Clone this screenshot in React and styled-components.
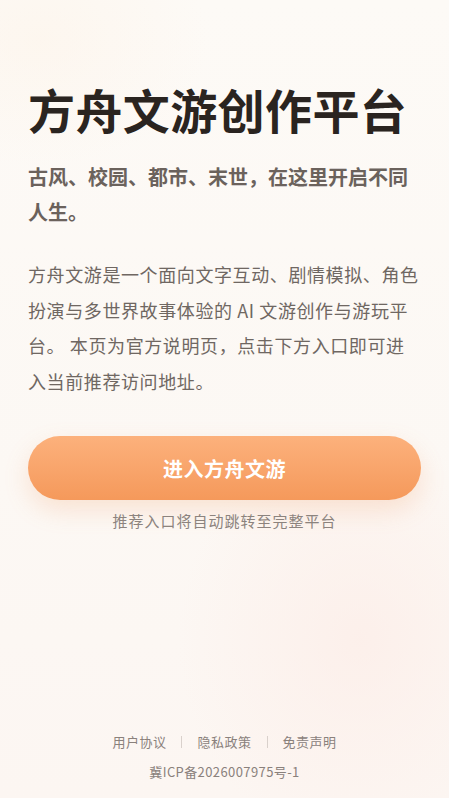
import React from "react";
import styled, { createGlobalStyle } from "styled-components";

const GlobalStyle = createGlobalStyle`
  html, body {
    margin: 0;
    padding: 0;
    background: #fdfaf6;
  }
  body {
    font-family: "Noto Sans CJK SC", "Noto Sans", sans-serif;
    -webkit-font-smoothing: antialiased;
  }
  * { box-sizing: border-box; }
`;

const Page = styled.div`
  min-height: 100vh;
  display: flex;
  flex-direction: column;
  background:
    radial-gradient(ellipse 260px 300px at 360px 640px, rgba(252, 232, 226, 0.5), rgba(252, 232, 226, 0) 70%),
    radial-gradient(ellipse 240px 180px at 40px 40px, rgba(253, 242, 230, 0.45), rgba(253, 242, 230, 0) 70%),
    linear-gradient(180deg, #fdfaf6 0%, #fcf8f4 60%, #fcf6f2 100%);
`;

const Main = styled.main`
  padding: 80px 28px 0;
  display: flex;
  flex-direction: column;
`;

const Title = styled.h1`
  margin: 0;
  font-size: 47px;
  line-height: 57px;
  font-weight: 700;
  letter-spacing: 0.4px;
  color: #2a2420;
  white-space: nowrap;
`;

const Subtitle = styled.p`
  margin: 22px 0 0;
  font-size: 20px;
  line-height: 35px;
  font-weight: 700;
  color: #6b625c;
`;

const Body = styled.p`
  margin: 28px 0 0;
  font-size: 18px;
  line-height: 35.5px;
  font-weight: 400;
  letter-spacing: 0.6px;
  color: #6f6762;
`;

const EnterButton = styled.button`
  margin-top: 37px;
  height: 64px;
  width: 100%;
  border: none;
  border-radius: 32px;
  background: linear-gradient(180deg, #fcb17c 0%, #f5995b 100%);
  box-shadow: 0 10px 24px rgba(240, 150, 90, 0.22);
  color: #ffffff;
  font-family: inherit;
  font-size: 20px;
  font-weight: 700;
  letter-spacing: 0.5px;
  cursor: pointer;
`;

const Hint = styled.p`
  margin: 10px 0 0;
  text-align: center;
  font-size: 15px;
  line-height: 22px;
  letter-spacing: 1px;
  color: #8c837e;
`;

const Footer = styled.footer`
  margin-top: auto;
  padding: 0 0 16px;
  display: flex;
  flex-direction: column;
  align-items: center;
  gap: 10px;
`;

const Links = styled.nav`
  display: flex;
  align-items: center;
  gap: 15px;
`;

const FooterLink = styled.a`
  font-size: 13px;
  line-height: 20px;
  letter-spacing: 0.5px;
  color: #8a817c;
  text-decoration: none;
`;

const Divider = styled.span`
  width: 1px;
  height: 12px;
  background: #d9d1cc;
`;

const Icp = styled.div`
  font-size: 13px;
  line-height: 20px;
  letter-spacing: 0.4px;
  color: #8a817c;
`;

export default function App() {
  return (
    <>
      <GlobalStyle />
      <Page>
        <Main>
          <Title>方舟文游创作平台</Title>
          <Subtitle>古风、校园、都市、末世，在这里开启不同人生。</Subtitle>
          <Body>
            方舟文游是一个面向文字互动、剧情模拟、角色扮演与多世界故事体验的 AI 文游创作与游玩平台。 本页为官方说明页，点击下方入口即可进入当前推荐访问地址。
          </Body>
          <EnterButton>进入方舟文游</EnterButton>
          <Hint>推荐入口将自动跳转至完整平台</Hint>
        </Main>
        <Footer>
          <Links>
            <FooterLink href="#">用户协议</FooterLink>
            <Divider />
            <FooterLink href="#">隐私政策</FooterLink>
            <Divider />
            <FooterLink href="#">免责声明</FooterLink>
          </Links>
          <Icp>冀ICP备2026007975号-1</Icp>
        </Footer>
      </Page>
    </>
  );
}
